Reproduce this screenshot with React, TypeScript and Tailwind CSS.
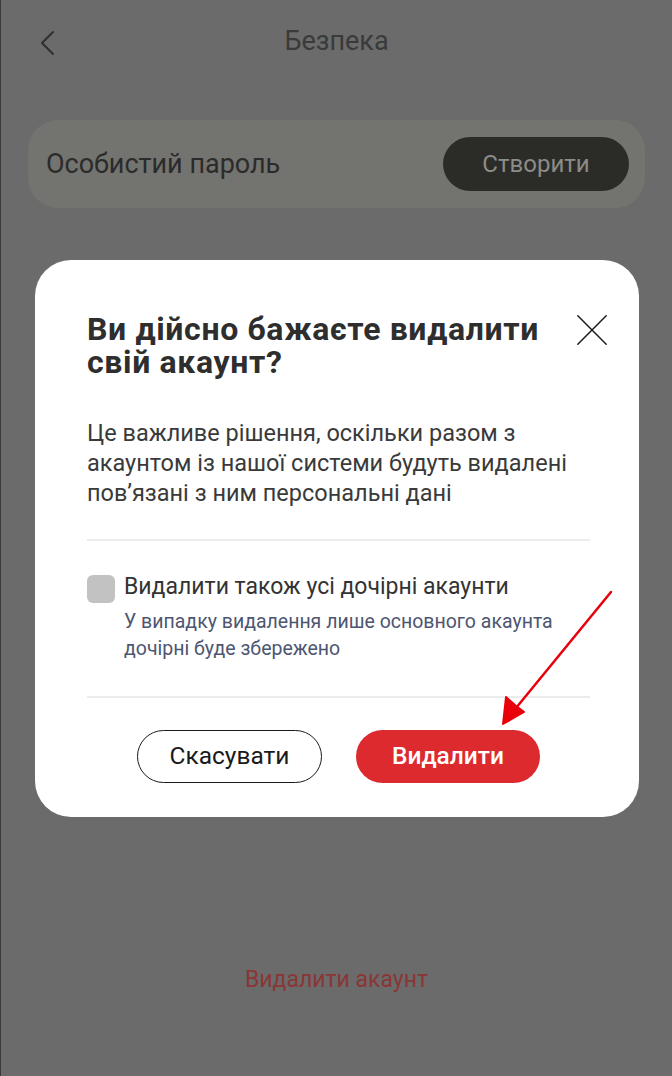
export default function App() {
  return (
    <div className="relative w-[672px] h-[1076px] overflow-hidden bg-[#6b6b6b] border-l border-[#3a3a3a] font-['Roboto',sans-serif]">
      {/* page under the overlay */}
      <header className="relative flex items-center justify-center h-[82px]">
        <button className="absolute left-[38px] top-[30px] text-[#2f2f2f]">
          <svg width="18" height="26" viewBox="0 0 18 26" fill="none">
            <path d="M14 2L3 13l11 11" stroke="currentColor" strokeWidth="2" strokeLinecap="round" strokeLinejoin="round" />
          </svg>
        </button>
        <h1 className="text-[27px] text-[#3a3a3a] leading-none">Безпека</h1>
      </header>

      <div className="mx-[27px] mt-[38px] h-[88px] rounded-[30px] bg-[#73736f] flex items-center justify-between pl-[18px] pr-[16px]">
        <span className="text-[27px] text-[#2b2b2b]">Особистий пароль</span>
        <button className="w-[186px] h-[54px] rounded-full bg-[#2b2b27] text-[24px] text-[#8c8c88]">Створити</button>
      </div>

      <div className="mt-[758px] text-center text-[23px] leading-[28px] text-[#8a3636]">Видалити акаунт</div>

      {/* modal */}
      <div className="absolute left-[34px] top-[260px] w-[604px] rounded-[36px] bg-white pl-[52px] pr-[49px] pt-[53px] pb-[34px]">
        <div className="flex items-start justify-between">
          <h2 className="text-[32px] leading-[33px] tracking-[0.02em] font-bold text-[#2e2e2e] w-[472px]">Ви дійсно бажаєте видалити свій акаунт?</h2>
          <button className="-mr-[17px] mt-[2px] text-[#1c1c1c]">
            <svg width="30" height="30" viewBox="0 0 30 30" fill="none">
              <path d="M0.8 0.8L29.2 29.2M29.2 0.8L0.8 29.2" stroke="currentColor" strokeWidth="1.5" strokeLinecap="round" />
            </svg>
          </button>
        </div>
        <p className="mt-[39px] text-[23.5px] leading-[30px] text-[#3a3a3a]">
          Це важливе рішення, оскільки разом з акаунтом із нашої системи будуть видалені пов’язані з ним персональні дані
        </p>
        <div className="mt-[31px] h-[2px] bg-[#ececec]" />
        <div className="mt-[32px] flex gap-[9px]">
          <div className="w-[28px] h-[28px] rounded-[6px] bg-[#c2c2c2] shrink-0 mt-[2px]" />
          <div>
            <div className="text-[23px] leading-[28px] text-[#333333]">Видалити також усі дочірні акаунти</div>
            <div className="mt-[7px] text-[19.5px] leading-[27px] text-[#4d5670]">
              У випадку видалення лише основного акаунта дочірні буде збережено
            </div>
          </div>
        </div>
        <div className="mt-[34px] h-[2px] bg-[#ececec]" />
        <div className="mt-[32px] flex justify-center gap-[34px]">
          <button className="w-[185px] h-[53px] rounded-full border-[1.5px] border-[#1a1a1a] text-[24.5px] text-[#1a1a1a]">Скасувати</button>
          <button className="w-[184px] h-[53px] rounded-full bg-[#dc2a2f] text-[24.5px] font-medium text-white">Видалити</button>
        </div>
      </div>

      {/* annotation arrow */}
      <svg className="absolute left-0 top-0" width="672" height="1076" viewBox="0 0 672 1076" fill="none">
        <path d="M610 592 L515 708" stroke="#e8000b" strokeWidth="2.5" strokeLinecap="round" />
        <path d="M502 724 L505 697 L514 705 L523 712 Z" fill="#e8000b" stroke="#e8000b" strokeWidth="2" strokeLinejoin="round" />
      </svg>
    </div>
  );
}
